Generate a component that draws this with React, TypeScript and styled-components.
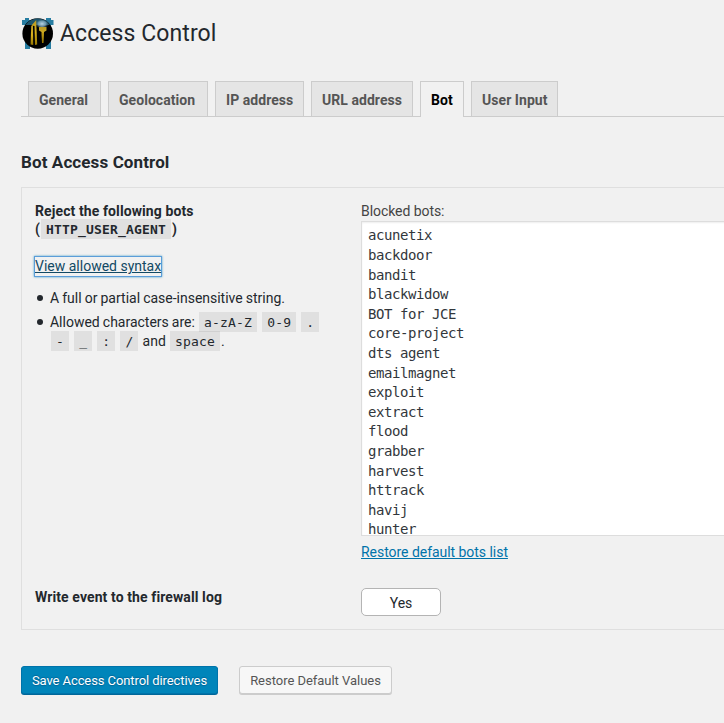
import React from "react";
import styled, { createGlobalStyle, css } from "styled-components";

const GlobalStyle = createGlobalStyle`
  * { box-sizing: border-box; }
  body {
    margin: 0;
    background: #f1f1f1;
    color: #23282d;
    font: 14px/19.6px Roboto, sans-serif;
    overflow: hidden;
  }
`;

const Page = styled.main`
  height: 723px;
  padding: 16px 0 0 21px;
  overflow: hidden;
`;

const Header = styled.header`
  display: flex;
  align-items: center;
  height: 34px;
  gap: 6px;
`;

const Logo = styled.svg`
  display: block;
  width: 33px;
  height: 34px;
`;

const Title = styled.h1`
  margin: 0;
  padding-top: 2px;
  font-size: 23px;
  line-height: 30px;
  font-weight: 400;
  letter-spacing: 0.08px;
`;

const Tabs = styled.nav`
  display: flex;
  gap: 7px;
  height: 36px;
  margin-top: 31px;
  padding-left: 7px;
  border-bottom: 1px solid #ccc;
`;

const Tab = styled.a<{ $width: number; $active?: boolean }>`
  width: ${(p) => p.$width}px;
  height: ${(p) => (p.$active ? 36 : 35)}px;
  padding: 6px 0 0 10px;
  border: 1px solid #ccc;
  border-bottom: 0;
  background: ${(p) => (p.$active ? "#f1f1f1" : "#e5e5e5")};
  color: ${(p) => (p.$active ? "#000" : "#555")};
  font-weight: 700;
  line-height: 24px;
  letter-spacing: 0.05px;
  white-space: nowrap;
`;

const Heading = styled.h2`
  margin: 33px 0 0;
  font-size: 17px;
  line-height: 24px;
  font-weight: 700;
  letter-spacing: 0.11px;
`;

const Panel = styled.section`
  display: grid;
  grid-template-columns: 326px 1fr;
  grid-template-rows: 386px 1fr;
  width: 760px;
  height: 443px;
  margin-top: 13px;
  padding: 14px 0 0 13px;
  border: 1px solid #dfdfdf;
`;

const Cell = styled.div``;

const Label = styled.div`
  font-weight: 700;
  line-height: 18px;
  letter-spacing: 0.1px;
`;

const Code = styled.code`
  margin: 0 1px;
  padding: 3px 5px 2px;
  background: rgba(0, 0, 0, 0.07);
  font-family: "DejaVu Sans Mono", monospace;
  font-size: 13px;
  line-height: 1;
  letter-spacing: 0.174px;
`;

const Link = styled.a<{ $focused?: boolean }>`
  color: #0073aa;
  text-decoration: underline;
  letter-spacing: -0.04px;
  ${(p) =>
    p.$focused &&
    css`
      display: inline-block;
      margin-top: 19px;
      line-height: 19px;
      color: #124964;
      letter-spacing: 0;
      box-shadow: 0 0 0 1px #5b9dd9, 0 0 2px 1px rgba(30, 140, 190, 0.8);
    `}
`;

const Rules = styled.ul`
  margin: 12px 0 0;
  padding: 0 0 0 15px;
  width: 293px;
  list-style: none;
`;

const Rule = styled.li`
  position: relative;
  margin-bottom: 5px;
  line-height: 19px;
  letter-spacing: -0.01px;
  word-spacing: -0.35px;
  &::before {
    content: "";
    position: absolute;
    left: -13px;
    top: 6px;
    width: 6px;
    height: 6px;
    border-radius: 50%;
    background: #23282d;
  }
`;

const FieldLabel = styled.div`
  height: 19px;
  color: #444;
  letter-spacing: -0.06px;
`;

const BotList = styled.textarea`
  display: block;
  width: 420px;
  height: 315px;
  padding: 4.4px 6px 4px;
  border: 1px solid #ddd;
  border-radius: 0;
  outline: 0;
  resize: none;
  overflow: hidden;
  background: #fff;
  box-shadow: inset 0 1px 2px rgba(0, 0, 0, 0.07);
  color: #32373c;
  font: 14px/19.6px "DejaVu Sans Mono", monospace;
  letter-spacing: -0.429px;
`;

const ListFooter = styled.div`
  margin-top: 7px;
`;

const Toggle = styled.button`
  width: 80px;
  height: 28px;
  padding: 1px 0 0;
  border: 1px solid #b4b4b4;
  border-radius: 5px;
  background: #fff;
  color: #23282d;
  font: 14px Roboto, sans-serif;
`;

const Actions = styled.div`
  display: flex;
  gap: 21px;
  margin-top: 36px;
`;

const Button = styled.button<{ $primary?: boolean }>`
  width: ${(p) => (p.$primary ? 197 : 153)}px;
  height: 28px;
  padding: 1px 0 0;
  border: 1px solid ${(p) => (p.$primary ? "#0073aa" : "#ccc")};
  border-radius: 3px;
  background: ${(p) => (p.$primary ? "#0085ba" : "#f7f7f7")};
  color: ${(p) => (p.$primary ? "#fff" : "#555")};
  box-shadow: 0 1px 0 ${(p) => (p.$primary ? "#006799" : "#ccc")};
  font: 13px/25px Roboto, sans-serif;
  letter-spacing: ${(p) => (p.$primary ? "-0.09px" : "-0.03px")};
  white-space: nowrap;
  text-shadow: ${(p) => (p.$primary ? "0 -1px 1px #006799, 0 1px 1px #006799" : "none")};
`;

const tabs = [
  { name: "General", width: 73 },
  { name: "Geolocation", width: 100 },
  { name: "IP address", width: 89 },
  { name: "URL address", width: 102 },
  { name: "Bot", width: 44, active: true },
  { name: "User Input", width: 87 },
];

const bots = [
  "acunetix", "backdoor", "bandit", "blackwidow", "BOT for JCE", "core-project",
  "dts agent", "emailmagnet", "exploit", "extract", "flood", "grabber",
  "harvest", "httrack", "havij", "hunter",
];

function NinjaLogo() {
  return (
    <Logo viewBox="0 0 33 34">
      <defs>
        <radialGradient id="shine">
          <stop offset="0" stopColor="#b8d3e2" />
          <stop offset="0.55" stopColor="#7fa9bf" stopOpacity="0.8" />
          <stop offset="1" stopColor="#26566d" stopOpacity="0" />
        </radialGradient>
        <linearGradient id="gold" x1="0" x2="0" y1="0" y2="1">
          <stop offset="0" stopColor="#b89a26" />
          <stop offset="0.5" stopColor="#d9b11c" />
          <stop offset="1" stopColor="#957600" />
        </linearGradient>
      </defs>
      <path d="M4 2H8V4H25V2H30V4H32.500V9H30V33H25V28H9V33H4V9H1V4H4Z" fill="#277da2" />
      <circle cx="16.700" cy="17.500" r="15.300" fill="#000" />
      <path d="M5 8.500Q9 3 16.500 2.300Q24 3 28.500 8.500V9H5Z" fill="#286f8e" opacity="0.75" />
      <ellipse cx="21" cy="7.800" rx="7" ry="5" fill="url(#shine)" />
      <path d="M10.200 10L12 9L12.200 29L9.600 28.500Z" fill="url(#gold)" />
      <path d="M10.500 9.500L15.200 4L15.400 10L16.200 28.500L14 29L13.500 10Z" fill="url(#gold)" />
      <path d="M18 11H25.500V14.500L23 16L22.500 27H21L20.500 16L18 14.500Z" fill="url(#gold)" />
      <path d="M21.900 17V26" stroke="#765c00" strokeWidth="0.500" />
    </Logo>
  );
}

export default function App() {
  return (
    <>
      <GlobalStyle />
      <Page>
        <Header>
          <NinjaLogo />
          <Title>Access Control</Title>
        </Header>
        <Tabs>
          {tabs.map((t) => (
            <Tab key={t.name} $width={t.width} $active={t.active}>{t.name}</Tab>
          ))}
        </Tabs>
        <Heading>Bot Access Control</Heading>
        <Panel>
          <Cell>
            <Label>
              Reject the following bots<br />
              (<Code>HTTP_USER_AGENT</Code>)
            </Label>
            <Link $focused>View allowed syntax</Link>
            <Rules>
              <Rule>A full or partial case-insensitive string.</Rule>
              <Rule>
                Allowed characters are: <Code>a-zA-Z</Code> <Code>0-9</Code> <Code>.</Code>{" "}
                <Code>-</Code> <Code>_</Code> <Code>:</Code> <Code>/</Code> and <Code>space</Code>.
              </Rule>
            </Rules>
          </Cell>
          <Cell>
            <FieldLabel>Blocked bots:</FieldLabel>
            <BotList readOnly value={bots.join("\n")} />
            <ListFooter><Link>Restore default bots list</Link></ListFooter>
          </Cell>
          <Label>Write event to the firewall log</Label>
          <Cell><Toggle>Yes</Toggle></Cell>
        </Panel>
        <Actions>
          <Button $primary>Save Access Control directives</Button>
          <Button>Restore Default Values</Button>
        </Actions>
      </Page>
    </>
  );
}
